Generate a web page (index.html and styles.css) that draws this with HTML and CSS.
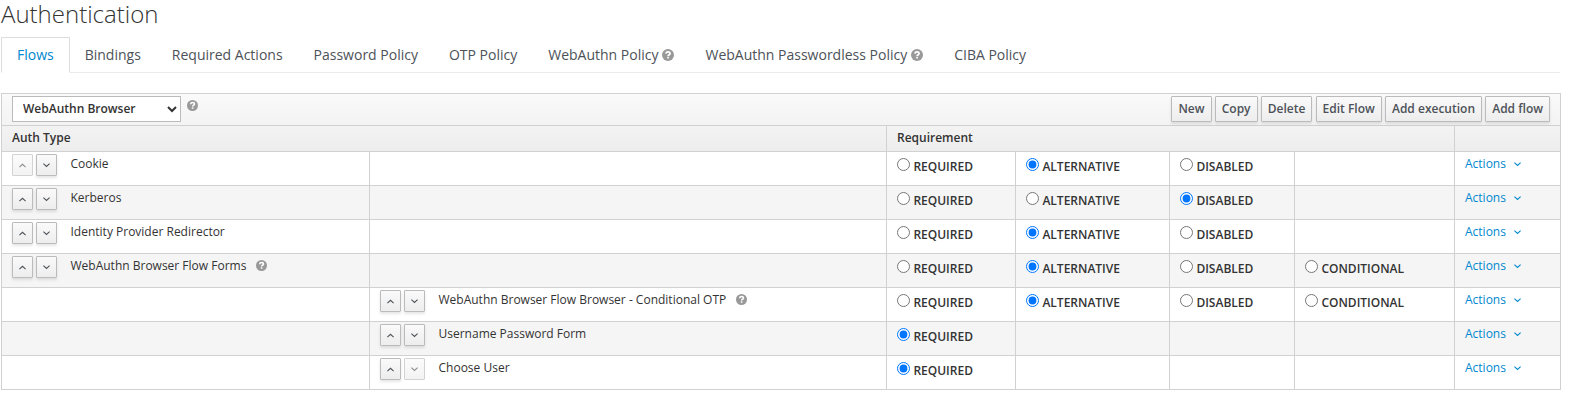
FILE: index.html
```html
<!DOCTYPE html>
<html lang="en">
<head>
<meta charset="utf-8">
<title>Authentication</title>
<link rel="stylesheet" href="styles.css">
</head>
<body>
<svg width="0" height="0" class="sprite">
  <symbol id="help" viewBox="0 0 12 12"><circle cx="6" cy="6" r="6" fill="#999"/><path d="M4 4.600C4.100 3.400 4.900 2.800 6 2.800s2.100.6 2.100 1.700C8.100 5.700 6.100 5.700 6.100 7.200M6.100 7.900v1.700" fill="none" stroke="#fff" stroke-width="1.700"/></symbol>
  <symbol id="up" viewBox="0 0 7 5"><path d="M.4 4.100 3.500 1.300 6.600 4.100" fill="none" stroke="currentColor" stroke-width="1.100"/></symbol>
  <symbol id="down" viewBox="0 0 7 5"><path d="M.4.700 3.500 3.500 6.600.700" fill="none" stroke="currentColor" stroke-width="1.100"/></symbol>
</svg>
<h1>Authentication</h1>
<ul class="tabs">
  <li class="active">Flows</li>
  <li>Bindings</li>
  <li>Required Actions</li>
  <li>Password Policy</li>
  <li>OTP Policy</li>
  <li>WebAuthn Policy<svg class="help"><use href="#help"/></svg></li>
  <li>WebAuthn Passwordless Policy<svg class="help"><use href="#help"/></svg></li>
  <li>CIBA Policy</li>
</ul>
<table class="flows">
  <colgroup><col class="c1"><col class="c2"><col class="c3"><col class="c4"><col class="c5"><col class="c6"><col class="c7"></colgroup>
  <thead>
    <tr class="toolbar"><th colspan="7"><div class="bar">
      <select><option>WebAuthn Browser</option></select>
      <svg class="help small"><use href="#help"/></svg>
      <div class="buttons"><button>New</button><button>Copy</button><button>Delete</button><button>Edit Flow</button><button>Add execution</button><button>Add flow</button></div>
    </div></th></tr>
    <tr class="heads"><th colspan="2">Auth Type</th><th colspan="4">Requirement</th><th></th></tr>
  </thead>
  <tbody id="rows"></tbody>
</table>
<script src="flows.js"></script>
</body>
</html>
```
FILE: styles.css
```css
* { box-sizing: border-box; }
body { margin: 0; background: #fff; color: #333; font: 12px/17px "Open Sans", sans-serif; overflow: hidden; }
.sprite { position: absolute; }
h1 { margin: 0 0 0 1px; height: 37px; font-size: 24px; font-weight: 300; line-height: 27px; }
.tabs { display: flex; width: 1559px; height: 36px; margin: 0 0 20px 1px; padding: 0; list-style: none; border-bottom: 1px solid #ececec; font-size: 14px; line-height: 20px; color: #4d5258; }
.tabs li { display: flex; align-items: flex-start; height: 36px; padding: 8px 16px 0 15px; white-space: nowrap; }
.tabs .active { border: 1px solid #ddd; border-bottom-color: #fff; padding: 7px 15px 0; background: #fff; color: #0088ce; }
.help { flex: none; width: 12px; height: 12px; margin: 4px 0 0 4px; }
.flows { width: 1560px; margin-left: 1px; table-layout: fixed; border-collapse: separate; border-spacing: 0; border: solid #d1d1d1; border-width: 1px 0 0 1px; }
.c1 { width: 368px; } .c2 { width: 517px; } .c3 { width: 129px; } .c4 { width: 154px; } .c5 { width: 125px; } .c6 { width: 160px; } .c7 { width: 106px; }
th, td { padding: 0 10px; border: solid #d1d1d1; border-width: 0 1px 1px 0; text-align: left; vertical-align: top; font-weight: 600; }
thead { background: linear-gradient(#fafafa, #ededed); }
.toolbar th { height: 32px; padding-top: 2px; }
.heads th { height: 26px; padding-top: 3px; }
.bar { display: flex; }
select { width: 169px; height: 26px; padding: 0 0 2px 6px; border: 1px solid #bbb; border-radius: 0; background-color: #fff; color: #333; font: 600 12px "Open Sans", sans-serif; }
.help.small { width: 11px; height: 11px; margin: 4px 0 0 6px; }
.buttons { display: flex; gap: 3.2px; margin-left: auto; }
button { height: 26px; padding: 0 6px; border: 1px solid #bbb; border-radius: 1px; background: linear-gradient(#fafafa, #ededed); box-shadow: 0 2px 3px rgba(3, 3, 3, .1); color: #4d5258; font: 600 12px/22px "Open Sans", sans-serif; }
td { height: 34px; }
tbody tr:nth-child(even) { background: #f5f5f5; }
.step { display: flex; padding-top: 2px; font-weight: 400; }
.step button { display: flex; align-items: center; justify-content: center; width: 21px; height: 22px; margin-right: 3px; padding: 1px 0 0; }
.step button svg { width: 7px; height: 5px; }
.step button:disabled { opacity: .65; box-shadow: none; }
.step span { padding: 1px 0 0 10.5px; }
.step .help { width: 11px; height: 11px; margin: 4px 0 0 9.5px; }
.choice { display: flex; padding-top: 6px; }
.choice input { width: 13px; height: 13px; margin: 0 3.4px 0 0; }
.actions { display: flex; padding-top: 3px; color: #0088ce; font-weight: 400; }
.actions svg { width: 7px; height: 5px; margin: 7px 0 0 8px; }
```
FILE: flows.js
```js
const LABELS = ["REQUIRED", "ALTERNATIVE", "DISABLED", "CONDITIONAL"];
// name, nesting level, number of choices, selected choice, disabled arrow, has tooltip
const ROWS = [
  ["Cookie", 0, 3, 1, "up", false],
  ["Kerberos", 0, 3, 2, "", false],
  ["Identity Provider Redirector", 0, 3, 1, "", false],
  ["WebAuthn Browser Flow Forms", 0, 4, 1, "", true],
  ["WebAuthn Browser Flow Browser - Conditional OTP", 1, 4, 1, "", true],
  ["Username Password Form", 1, 1, 0, "", false],
  ["Choose User", 1, 1, 0, "down", false]
];
const arrow = (dir, off) =>
  `<button ${dir === off ? "disabled" : ""}><svg><use href="#${dir}"/></svg></button>`;
document.getElementById("rows").innerHTML = ROWS.map(([name, level, count, picked, off, tip], row) => {
  const step = `<div class="step">${arrow("up", off)}${arrow("down", off)}<span>${name}</span>${tip ? '<svg class="help"><use href="#help"/></svg>' : ""}</div>`;
  const choices = LABELS.map((label, i) => i < count
    ? `<td><label class="choice"><input type="radio" name="r${row}" ${i === picked ? "checked" : ""}><span>${label}</span></label></td>`
    : "<td></td>").join("");
  return `<tr><td>${level ? "" : step}</td><td>${level ? step : ""}</td>${choices}<td><div class="actions">Actions<svg><use href="#down"/></svg></div></td></tr>`;
}).join("");
```
